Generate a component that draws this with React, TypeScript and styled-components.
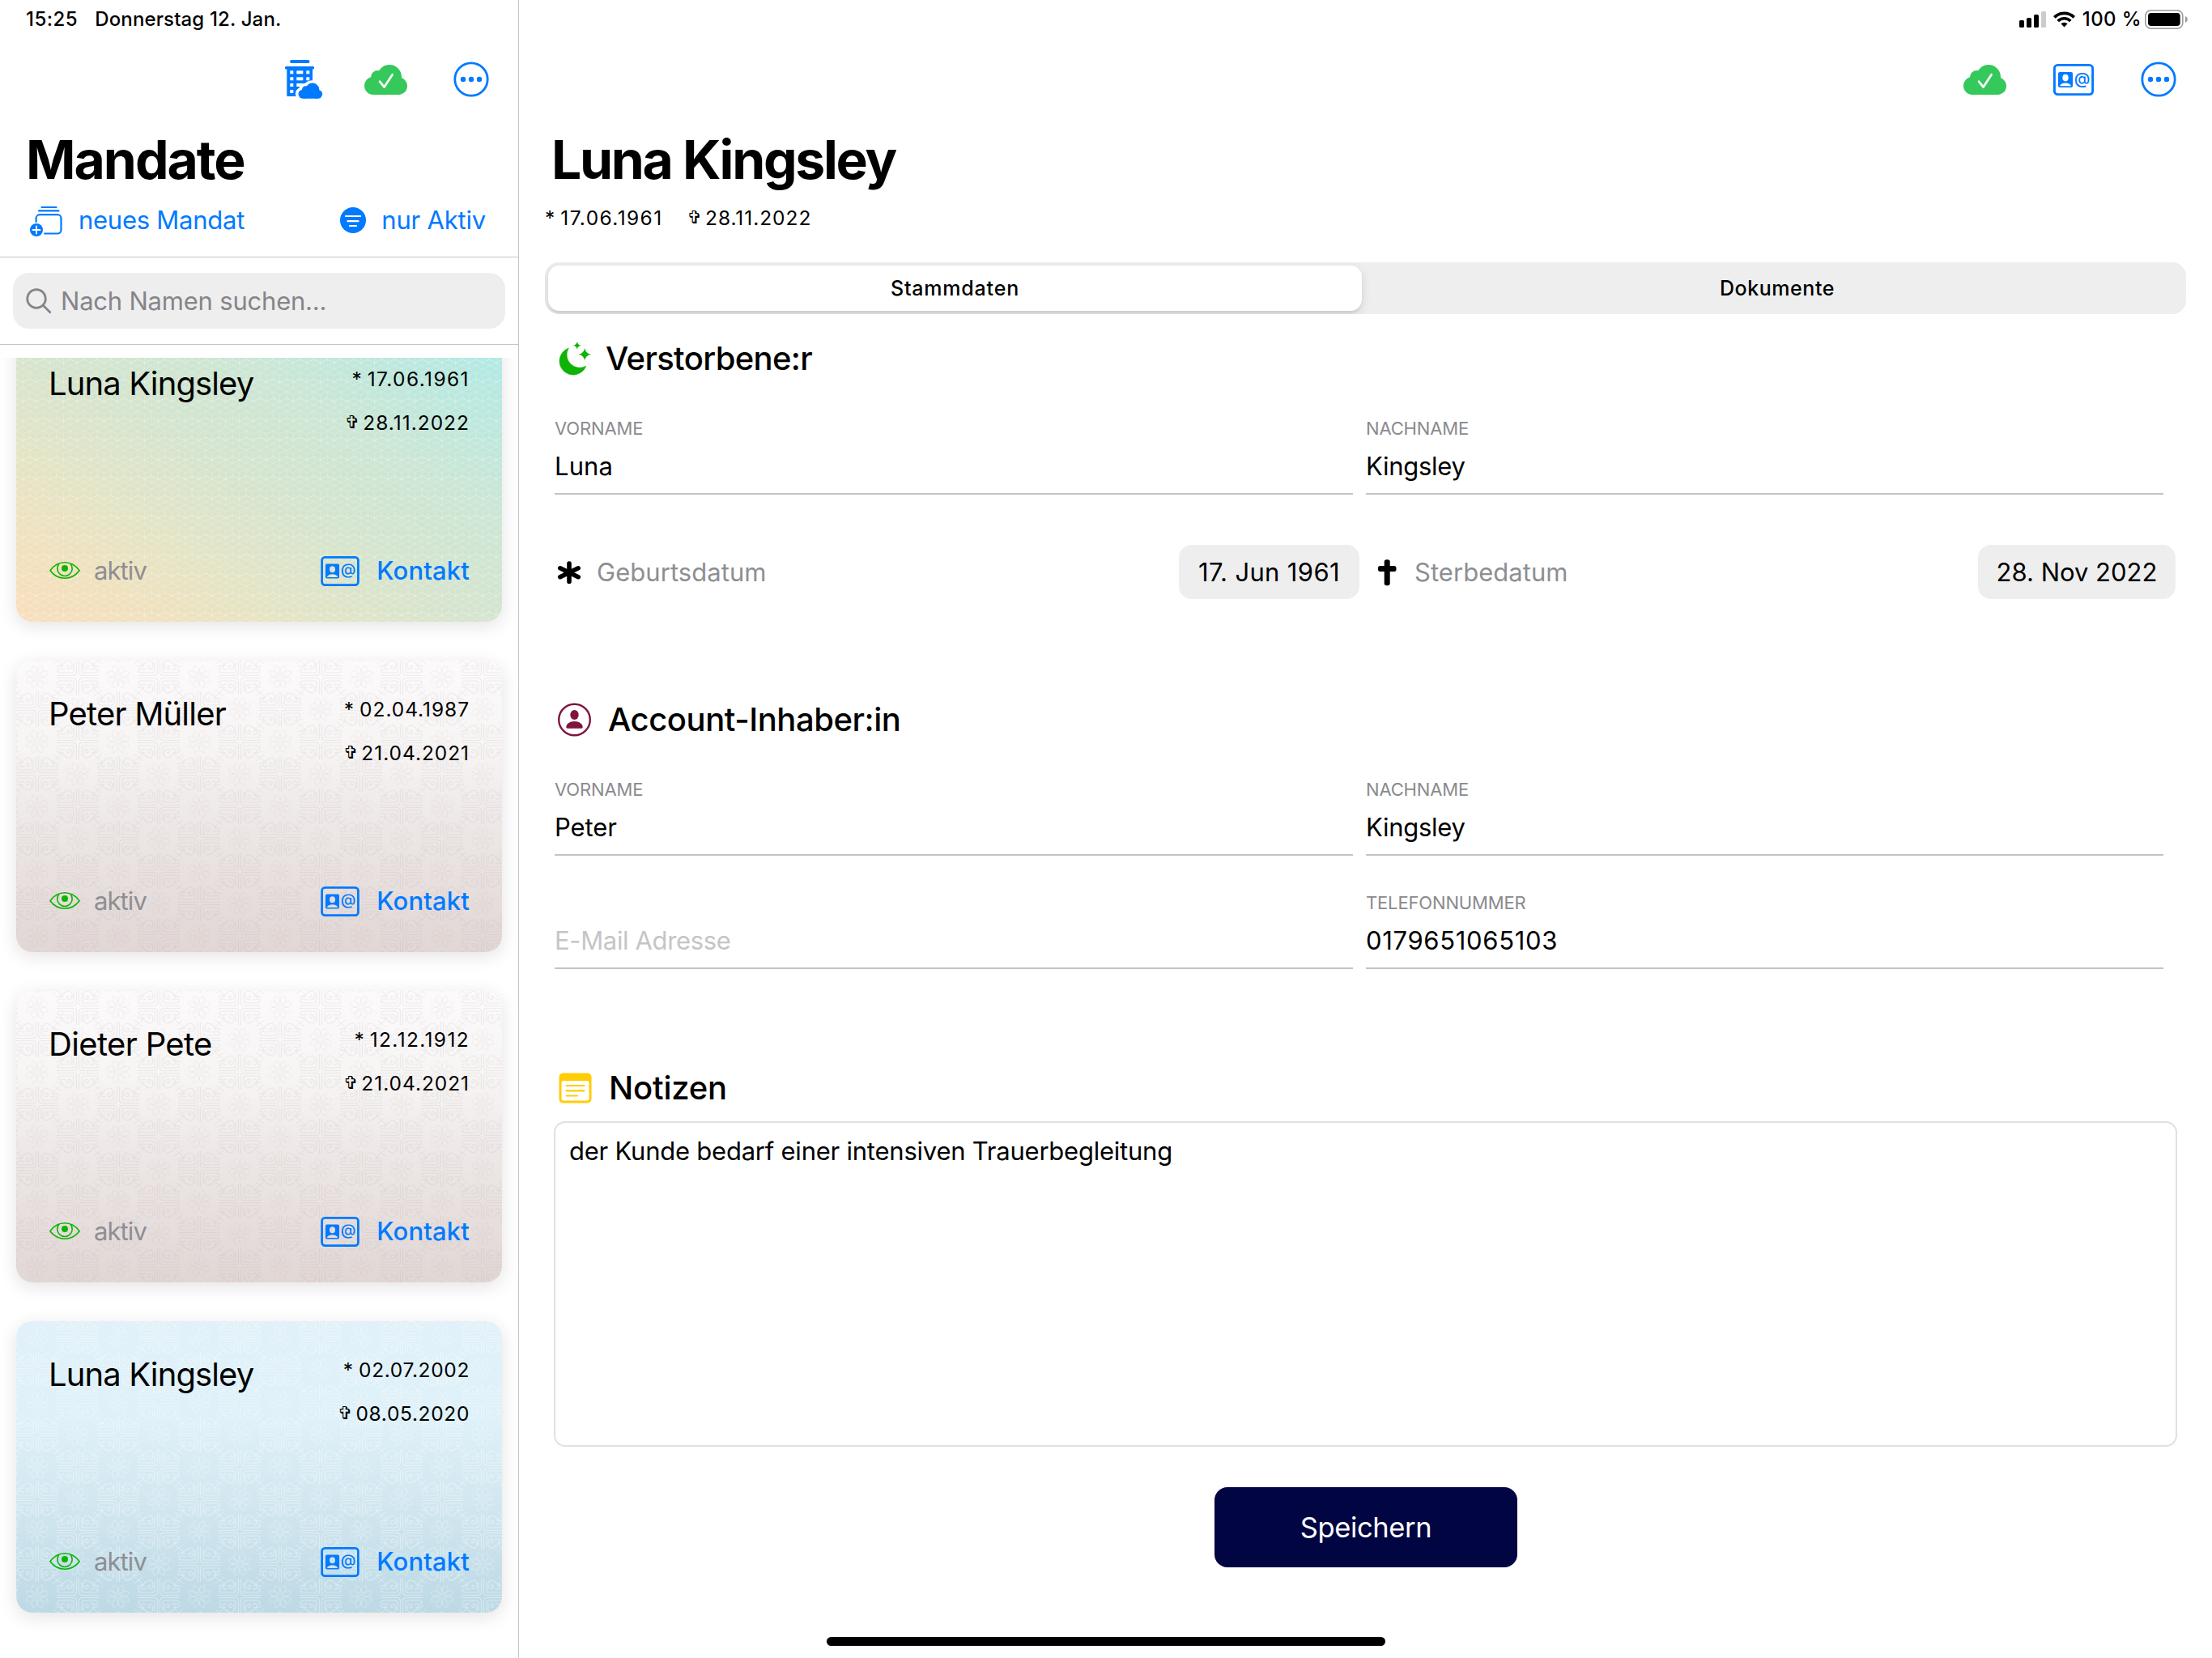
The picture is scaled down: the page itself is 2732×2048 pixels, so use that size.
import React from "react";
import styled, { createGlobalStyle, css } from "styled-components";

const BLUE = "#007aff";
const GREEN = "#0fb305";
const CLOUD_GREEN = "#35c85b";
const GRAY = "#8e8e93";

const GlobalStyle = createGlobalStyle`
  html, body { margin: 0; padding: 0; background: #fff; }
  * { box-sizing: border-box; }
  body { font-family: Inter, "Liberation Sans", sans-serif; color: #000; }
  svg { display: block; flex: none; overflow: visible; }
  button, input, textarea { font: inherit; color: inherit; border: 0; background: none; padding: 0; margin: 0; }
`;

/* ---------- text ---------- */

const Text = styled.span<{
  $size: number;
  $line?: number;
  $weight?: number;
  $track?: number;
  $color?: string;
}>`
  display: block;
  white-space: pre;
  font-size: ${(p) => p.$size}px;
  line-height: ${(p) => p.$line ?? 40}px;
  font-weight: ${(p) => p.$weight ?? 400};
  letter-spacing: ${(p) => p.$track ?? 0}px;
  color: ${(p) => p.$color ?? "inherit"};
`;

/* ---------- icons ---------- */

const CloudShape = ({ fill }: { fill: string }) => (
  <g fill={fill}>
    <circle cx="31" cy="15" r="15" />
    <circle cx="16.5" cy="15.5" r="8.5" />
    <circle cx="11" cy="26" r="11" />
    <circle cx="42.3" cy="26.3" r="10.7" />
    <path d="M11 15H40L43 26V37H11Z" />
  </g>
);

const CloudCheck = () => (
  <svg width="53" height="37" viewBox="0 0 53 37">
    <CloudShape fill={CLOUD_GREEN} />
    <path d="M19 20.6 24.6 27.6 34.6 12.2" fill="none" stroke="#fff" strokeWidth="2.7" strokeLinecap="round" strokeLinejoin="round" />
  </svg>
);

const Ellipsis = () => (
  <svg width="44" height="44" viewBox="0 0 44 44">
    <circle cx="22" cy="22" r="20.2" fill="none" stroke={BLUE} strokeWidth="2.8" />
    <g fill={BLUE}>
      <circle cx="12" cy="22" r="3.2" />
      <circle cx="22" cy="22" r="3.2" />
      <circle cx="32" cy="22" r="3.2" />
    </g>
  </svg>
);

const BuildingWindows = () => (
  <g fill="#fff">
    {[13.3, 21.3, 29, 37].map((y) => (
      <g key={y}>
        <rect x="6.3" y={y} width="4" height="4" />
        <rect x="14.3" y={y} width="8" height="4" />
        <rect x="26.3" y={y} width="4" height="4" />
      </g>
    ))}
  </g>
);

const BuildingSvg = styled.svg`
  margin-right: -5px;
`;

const BuildingCloud = () => (
  <BuildingSvg width="46" height="48" viewBox="0 0 46 48">
    <rect x="6.3" y="0" width="24" height="4" rx="1.6" fill={BLUE} />
    <rect x="0" y="8" width="36" height="3.6" rx="1.4" fill={BLUE} />
    <rect x="2.3" y="10" width="31.7" height="35" fill={BLUE} />
    <BuildingWindows />
    <g transform="translate(16.5 28.6) scale(.56 .52)" stroke="#fff" strokeWidth="13" strokeLinejoin="round">
      <CloudShape fill="#fff" />
    </g>
    <g transform="translate(16.5 28.6) scale(.56 .52)">
      <CloudShape fill={BLUE} />
    </g>
  </BuildingSvg>
);

const ContactCard = ({ width = 50, height = 39 }: { width?: number; height?: number }) => (
  <svg width={width} height={height} viewBox="0 0 50 39">
    <rect x="1.4" y="1.4" width="47.2" height="36.2" rx="4" fill="none" stroke={BLUE} strokeWidth="2.9" />
    <path
      fillRule="evenodd"
      fill={BLUE}
      d="M8 10H22A2 2 0 0 1 24 12V27A2 2 0 0 1 22 29H8A2 2 0 0 1 6 27V12A2 2 0 0 1 8 10ZM15 12.8A3.7 4.3 0 0 0 15 21.4A3.7 4.3 0 0 0 15 12.8ZM8 27.3H22C21.400 24.800 18.500 23.400 15 23.400C11.500 23.400 8.600 24.800 8 27.300Z"
    />
    <text x="35.600" y="24.700" fontSize="20" fontWeight="500" fill={BLUE} textAnchor="middle" fontFamily="Inter, sans-serif">
      @
    </text>
  </svg>
);

const NewCase = () => (
  <svg width="41" height="40" viewBox="0 -3 41 40">
    <g fill="none" stroke={BLUE} strokeWidth="2.2" strokeLinecap="round">
      <path d="M14.500 1H32.500M11 5.400H35.500" />
      <path d="M7.600 19V14.500A4.500 4.500 0 0 1 12.100 10.200H34A4.500 4.500 0 0 1 38.500 14.700V29A4.500 4.500 0 0 1 34 33.500H18" />
    </g>
    <circle cx="8" cy="29" r="8" fill={BLUE} />
    <path d="M8 24.500V33.500M3.500 29H12.500" stroke="#fff" strokeWidth="1.900" strokeLinecap="round" />
  </svg>
);

const FilterFilled = () => (
  <svg width="32" height="36" viewBox="-16 -18 32 36">
    <circle r="16" fill={BLUE} />
    <path d="M-9 -5H9M-6.500 1.200H6.500M-4 7H4" stroke="#fff" strokeWidth="2.200" strokeLinecap="round" />
  </svg>
);

const Magnifier = () => (
  <svg width="32" height="32" viewBox="0 0 32 32">
    <g fill="none" stroke="#858589" strokeWidth="2.700" strokeLinecap="round">
      <circle cx="13" cy="13" r="11.300" />
      <path d="M21.300 21.300 29.800 29.800" />
    </g>
  </svg>
);

const Eye = () => (
  <svg width="38" height="21" viewBox="0 0 38 21">
    <g fill="none" stroke={GREEN} strokeWidth="1.600">
      <path d="M.9 10.700C5.500 4.500 11.500 .8 19 .8S32.500 4.500 37.100 10.700C32.500 16.700 26.500 20.200 19 20.200S5.500 16.700 .9 10.700Z" strokeLinejoin="round" />
      <path d="M12 2.300A9.200 9.200 0 1 0 26 2.300" />
    </g>
    <circle cx="19" cy="8" r="4" fill={GREEN} />
  </svg>
);

const star = (x: number, y: number, r: number) =>
  `M${x} ${y - r}Q${x + r * 0.12} ${y - r * 0.12} ${x + r} ${y}Q${x + r * 0.12} ${y + r * 0.12} ${x} ${y + r}Q${x - r * 0.12} ${y + r * 0.12} ${x - r} ${y}Q${x - r * 0.12} ${y - r * 0.12} ${x} ${y - r}Z`;

const MoonStars = () => (
  <svg width="39" height="42" viewBox="0 0 39 42">
    <g fill={GREEN}>
      <path d="M12.300 8A17 17 0 1 0 33.800 30.200A16 16 0 0 1 12.300 8Z" strokeLinejoin="round" stroke={GREEN} strokeWidth=".6" />
      <path d={star(22.8, 4.8, 5)} />
      <path d={star(32.2, 15.7, 8)} />
    </g>
  </svg>
);

const PersonCircle = () => (
  <svg width="41" height="42" viewBox="1 0 41 42">
    <circle cx="20.500" cy="21" r="19.300" fill="none" stroke="#7f153f" strokeWidth="2.400" />
    <g fill="#7f153f">
      <ellipse cx="20.500" cy="15" rx="5.200" ry="6" />
      <path d="M10.300 30C10.300 26.500 14.500 23 20.500 23S30.700 26.500 30.700 30C30.700 31 30.200 31.700 29 31.700H12C10.800 31.700 10.300 31 10.300 30Z" />
    </g>
  </svg>
);

const NoteIcon = () => (
  <svg width="42" height="38" viewBox="0 0 42 38">
    <path
      fill="#ffcd05"
      fillRule="evenodd"
      d="M5.500 .5H35.500A5 5 0 0 1 40.500 5.500V32.500A5 5 0 0 1 35.500 37.500H5.500A5 5 0 0 1 .5 32.500V5.500A5 5 0 0 1 5.500 .5ZM6 10A2.500 2.500 0 0 0 3.500 12.500V32A2.500 2.500 0 0 0 6 34.500H35A2.500 2.500 0 0 0 37.500 32V12.500A2.500 2.500 0 0 0 35 10Z"
    />
    <path d="M9.500 16H31.500M9.500 22.300H31.500M9.500 28.500H23" stroke="#ffcd05" strokeWidth="2.200" strokeLinecap="round" />
  </svg>
);

const Asterisk = () => (
  <svg width="36" height="30" viewBox="-18 -15 36 30">
    <path d="M0 -11V11.500M-11.200 -5.200 11.200 5.700M-11.200 5.700 11.200 -5.200" stroke="#000" strokeWidth="5.600" strokeLinecap="round" />
  </svg>
);

const Cross = () => (
  <svg width="36" height="34" viewBox="0 0 36 34">
    <rect x="14.700" y="1.300" width="7" height="32" rx="2.800" />
    <rect x="7" y="9" width="22.500" height="7" rx="2.800" />
  </svg>
);

const Signal = () => (
  <svg width="33" height="20" viewBox="0 0 33 20">
    <rect x="0" y="11" width="6" height="9" rx="1.600" />
    <rect x="9" y="8" width="6" height="12" rx="1.600" />
    <rect x="18" y="4" width="6" height="16" rx="1.600" />
    <rect x="27" y="0" width="6" height="20" rx="1.600" fill="#cbcbcb" />
  </svg>
);

const Wifi = () => (
  <svg width="27" height="20" viewBox="0 0 27 20">
    <g fill="none" stroke="#000" strokeWidth="3.700">
      <path d="M1.300 7.400A17.400 17.400 0 0 1 25.700 7.400" />
      <path d="M5.700 12A11 11 0 0 1 21.300 12" />
    </g>
    <path d="M9.400 15.300A6 6 0 0 1 17.600 15.300L13.500 19.600Z" />
  </svg>
);

const Battery = () => (
  <svg width="53" height="24" viewBox="0 0 53 24">
    <rect x=".8" y=".8" width="46" height="22.400" rx="6.800" fill="none" stroke="#9b9b9b" strokeWidth="1.600" />
    <rect x="4" y="4" width="39.700" height="16" rx="3.800" />
    <path d="M50 8C52 8.800 52.800 10.300 52.800 12S52 15.200 50 16Z" fill="#9b9b9b" />
  </svg>
);

/* ---------- card textures ---------- */

const TextureSvg = styled.svg`
  position: absolute;
  inset: 0;
  width: 100%;
  height: 100%;
`;

const CubeTexture = () => (
  <TextureSvg>
    <defs>
      <pattern id="cubes" width="16.700" height="24" patternUnits="userSpaceOnUse">
        <path
          d="M0 4 8.350 0 16.700 4V12L8.350 16 0 12ZM0 4 8.350 8 16.700 4M8.350 8V16M8.350 16V24M0 12V20M0 12 8.350 16 16.700 12M0 20 8.350 16 16.700 20M0 20 8.350 24 16.700 20"
          fill="none"
          stroke="#fff"
          strokeOpacity=".3"
          strokeWidth=".700"
        />
      </pattern>
    </defs>
    <rect width="100%" height="100%" fill="url(#cubes)" />
  </TextureSvg>
);

const Blossom = ({ x, y }: { x: number; y: number }) => (
  <g transform={`translate(${x} ${y})`} strokeWidth=".7">
    <circle r="2.500" />
    {[22.5, 67.5, 112.5, 157.5, 202.5, 247.5, 292.5, 337.5].map((a) => (
      <path key={a} transform={`rotate(${a})`} d="M0 -4C-3 -6 -4.500 -12 -1.500 -13L0 -15L1.500 -13C4.500 -12 3 -6 0 -4" />
    ))}
  </g>
);

const Scroll = ({ x, y }: { x: number; y: number }) => (
  <g transform={`translate(${x} ${y})`} strokeWidth="1.200">
    {[
      [1, 1],
      [-1, 1],
      [1, -1],
      [-1, -1],
    ].map(([sx, sy]) => (
      <path
        key={`${sx}${sy}`}
        transform={`scale(${sx} ${sy})`}
        d="M1.500 22V6Q1.500 1.500 6 1.500H26M5 18V8Q5 5 8 5H22Q25 5 25 8Q24 11 21.500 9.500M9 20Q4.500 13 9 10Q14 8 13 13Q11 15 10 12M16 10Q20 7 21 12Q20 15 17.500 13M9 20Q14 20 17 17T27 12"
      />
    ))}
  </g>
);

const OrnamentTexture = ({ id, color, opacity }: { id: string; color: string; opacity: number }) => (
  <TextureSvg>
    <defs>
      <pattern id={id} x="26" y="20" width="100" height="80" patternUnits="userSpaceOnUse">
        <g fill="none" stroke={color} strokeOpacity={opacity} strokeWidth="1">
          <Blossom x={50} y={40} />
          <Blossom x={0} y={0} />
          <Blossom x={100} y={0} />
          <Blossom x={0} y={80} />
          <Blossom x={100} y={80} />
          <Scroll x={50} y={0} />
          <Scroll x={50} y={80} />
          <Scroll x={0} y={40} />
          <Scroll x={100} y={40} />
          <path d="M20 16 30 24M30 16 20 24M70 16 80 24M80 16 70 24M20 56 30 64M30 56 20 64M70 56 80 64M80 56 70 64" />
        </g>
      </pattern>
    </defs>
    <rect width="100%" height="100%" fill={`url(#${id})`} />
  </TextureSvg>
);

/* ---------- shell ---------- */

const Screen = styled.div`
  display: flex;
  width: 2732px;
  height: 2048px;
  background: #fff;
  overflow: hidden;
`;

const Sidebar = styled.aside`
  display: flex;
  flex-direction: column;
  width: 641px;
  flex: none;
  border-right: 1px solid #c6c6c8;
`;

const Main = styled.main`
  display: flex;
  flex-direction: column;
  flex: 1;
  min-width: 0;
`;

const StatusBar = styled.div<{ $end?: boolean }>`
  display: flex;
  align-items: center;
  height: 48px;
  padding: ${(p) => (p.$end ? "0 30px 0 0" : "0 0 1px 32px")};
  gap: ${(p) => (p.$end ? 9 : 21)}px;
  justify-content: ${(p) => (p.$end ? "flex-end" : "flex-start")};
`;

const StatusText = styled(Text)`
  margin-right: -5px;
`;

const Toolbar = styled.div<{ $right: number; $gap: number }>`
  display: flex;
  align-items: center;
  justify-content: flex-end;
  gap: ${(p) => p.$gap}px;
  height: 101px;
  padding-bottom: 1px;
  padding-right: ${(p) => p.$right}px;
`;

const Title = styled.h1<{ $left: number; $track: number }>`
  margin: 8px 0 0 ${(p) => p.$left}px;
  font-size: 66px;
  line-height: 80px;
  font-weight: 700;
  letter-spacing: ${(p) => p.$track}px;
`;

/* ---------- sidebar ---------- */

const Actions = styled.div`
  display: flex;
  justify-content: space-between;
  padding: 15px 40px 25px 37px;
  border-bottom: 1px solid #c6c6c8;
`;

const Action = styled.button<{ $gap: number }>`
  display: flex;
  align-items: center;
  height: 40px;
  gap: ${(p) => p.$gap}px;
`;

const SearchArea = styled.div`
  padding: 19px 16px 19px 16px;
  border-bottom: 1px solid #c6c6c8;
`;

const SearchField = styled.label`
  display: flex;
  align-items: center;
  gap: 11px;
  height: 69px;
  padding-left: 16px;
  border-radius: 20px;
  background: #eeeeee;
`;

const CardViewport = styled.div`
  flex: 1;
  min-height: 0;
  margin-top: 16px;
  overflow: hidden;
`;

const CardList = styled.div`
  display: flex;
  flex-direction: column;
  gap: 48px;
  margin-top: -34px;
  padding: 0 20px;
`;

type Tone = "dawn" | "stone" | "sky";

const tones: Record<Tone, string> = {
  dawn: "linear-gradient(to top right, #f8debb 0%, #f0e1be 15%, #e3e4c5 30%, #d5e4ce 48%, #cbe6d4 68%, #b9e8df 86%, #aee9e5 100%)",
  stone: "linear-gradient(#fcfafb 0%, #f7f4f4 30%, #ebe5e4 62%, #e1d7d5 100%)",
  sky: "linear-gradient(#e0f1f9 0%, #def0f8 35%, #cfe5ee 68%, #bcd9e5 100%)",
};

const Card = styled.article<{ $tone: Tone }>`
  position: relative;
  display: flex;
  flex-direction: column;
  justify-content: space-between;
  flex: none;
  height: 360px;
  padding: 40px 40px 43px 40px;
  border-radius: 20px;
  background: ${(p) => tones[p.$tone]};
  box-shadow: 0 5px 22px rgba(40, 20, 25, 0.12);
`;

const TextureClip = styled.div`
  position: absolute;
  inset: 0;
  border-radius: 20px;
  overflow: hidden;
`;

const CardRow = styled.div`
  position: relative;
  display: flex;
  justify-content: space-between;
`;

const Dates = styled.div`
  display: flex;
  flex-direction: column;
  align-items: flex-end;
  gap: 14px;
`;

const DateLine = styled.div`
  display: flex;
`;

const Mark = styled.span<{ $cross?: boolean }>`
  font-size: ${(p) => (p.$cross ? 22 : 24.5)}px;
  line-height: 40px;
  font-family: ${(p) => (p.$cross ? '"DejaVu Sans", sans-serif' : "Inter, sans-serif")};
  margin-right: ${(p) => (p.$cross ? 4 : 7)}px;
`;

const Label = styled.div<{ $gap: number }>`
  display: flex;
  align-items: center;
  gap: ${(p) => p.$gap}px;
`;

const DateText = ({ value, cross, track, size = 24.5 }: { value: string; cross?: boolean; track: number; size?: number }) => (
  <DateLine>
    <Mark $cross={cross}>{cross ? "✞" : "*"}</Mark>
    <Text $size={size} $track={track}>
      {value}
    </Text>
  </DateLine>
);

interface CaseItem {
  name: string;
  nameTrack: number;
  born: string;
  bornTrack: number;
  died: string;
  diedTrack: number;
  tone: Tone;
}

const cases: CaseItem[] = [
  { name: "Luna Kingsley", nameTrack: -0.88, born: "17.06.1961", bornTrack: 1.4, died: "28.11.2022", diedTrack: 1, tone: "dawn" },
  { name: "Peter Müller", nameTrack: -0.8, born: "02.04.1987", bornTrack: 0.95, died: "21.04.2021", diedTrack: 0.95, tone: "stone" },
  { name: "Dieter Pete", nameTrack: -0.65, born: "12.12.1912", bornTrack: 1.35, died: "21.04.2021", diedTrack: 0.95, tone: "stone" },
  { name: "Luna Kingsley", nameTrack: -0.88, born: "02.07.2002", bornTrack: 0.65, died: "08.05.2020", diedTrack: 0.65, tone: "sky" },
];

const StatusEye = styled.span`
  padding: 0 0 1px 1px;
`;

const CaseCard = ({ item, index }: { item: CaseItem; index: number }) => (
  <Card $tone={item.tone}>
    <TextureClip>
      {item.tone === "dawn" && <CubeTexture />}
      {item.tone === "stone" && <OrnamentTexture id={`ornament-${index}`} color="#a08c8a" opacity={0.12} />}
      {item.tone === "sky" && <OrnamentTexture id={`ornament-${index}`} color="#ffffff" opacity={0.36} />}
    </TextureClip>
    <CardRow>
      <Text $size={40} $line={51} $track={item.nameTrack}>
        {item.name}
      </Text>
      <Dates>
        <DateText value={item.born} track={item.bornTrack} />
        <DateText value={item.died} track={item.diedTrack} cross />
      </Dates>
    </CardRow>
    <CardRow>
      <Label $gap={17}>
        <StatusEye>
          <Eye />
        </StatusEye>
        <Text $size={31} $track={-0.9} $color={GRAY}>
          aktiv
        </Text>
      </Label>
      <Label $gap={21}>
        <ContactCard width={48} height={37} />
        <Text $size={31} $weight={500} $color={BLUE} $track={0.15}>
          Kontakt
        </Text>
      </Label>
    </CardRow>
  </Card>
);

/* ---------- detail form ---------- */

const LifeDates = styled.div`
  display: flex;
  gap: 30px;
  margin: 12px 0 0 32px;
`;

const Segmented = styled.div`
  display: flex;
  flex: none;
  height: 64px;
  margin: 35px 32px 0;
  padding: 4px;
  border-radius: 17px;
  background: #eeeeee;
  overflow: hidden;
`;

const Segment = styled.button<{ $active?: boolean }>`
  flex: 1;
  display: flex;
  align-items: center;
  justify-content: center;
  padding-left: 12px;
  border-radius: 14px;
  ${(p) =>
    p.$active &&
    css`
      flex: none;
      width: 1005px;
      padding-left: 0;
      background: #fff;
      box-shadow: 0 4px 12px rgba(0, 0, 0, 0.12), 0 3px 2px rgba(0, 0, 0, 0.05);
    `}
`;

const SectionHeading = styled.div<{ $top: number; $gap: number }>`
  display: flex;
  align-items: center;
  gap: ${(p) => p.$gap}px;
  height: 56px;
  flex: none;
  margin: ${(p) => p.$top}px 0 0 49px;
`;

const FieldGrid = styled.div`
  display: grid;
  grid-template-columns: 986px 985px;
  gap: 43px 16px;
  margin: 43px 0 0 44px;
`;

const Field = styled.div`
  height: 97px;
  padding-bottom: 11px;
  border-bottom: 2px solid #c4c4c6;
  display: flex;
  flex-direction: column;
  justify-content: space-between;
`;

const DateGrid = styled.div`
  display: grid;
  grid-template-columns: 994px 992px;
  gap: 16px;
  margin: 62px 0 0 44px;
`;

const DateField = styled.div`
  display: flex;
  align-items: center;
  justify-content: space-between;
  height: 67px;
`;

const DatePill = styled.button<{ $width: number }>`
  display: flex;
  align-items: center;
  justify-content: center;
  width: ${(p) => p.$width}px;
  height: 67px;
  border-radius: 16px;
  background: #eeeeee;
`;

const Notes = styled.div`
  height: 402px;
  width: 2005px;
  flex: none;
  margin: 13px 0 0 43px;
  padding: 15px 17px;
  border: 2px solid #e1e1e3;
  border-radius: 14px;
`;

const SaveButton = styled.button`
  display: flex;
  align-items: center;
  justify-content: center;
  flex: none;
  width: 374px;
  height: 99px;
  margin: 50px 0 0 859px;
  border-radius: 16px;
  background: #010542;
`;

const HomeIndicator = styled.div`
  width: 690px;
  height: 11px;
  flex: none;
  margin: 86px 0 0 380px;
  border-radius: 6px;
  background: #000;
`;

const FormField = ({ label, value, placeholder, track = 0 }: { label?: string; value?: string; placeholder?: string; track?: number }) => (
  <Field>
    <Text $size={22} $line={30} $color="#8a8a8e" $track={-0.15}>
      {label ?? " "}
    </Text>
    <Text $size={31} $line={44} $track={track} $color={value ? "#000" : "#c5c5c7"}>
      {value ?? placeholder}
    </Text>
  </Field>
);

export default function App() {
  return (
    <Screen>
      <GlobalStyle />
      <Sidebar>
        <StatusBar>
          <Text $size={24} $weight={500} $track={0.5}>
            15:25
          </Text>
          <Text $size={24} $weight={500} $track={0.14}>
            Donnerstag 12. Jan.
          </Text>
        </StatusBar>
        <Toolbar $right={36} $gap={57}>
          <BuildingCloud />
          <CloudCheck />
          <Ellipsis />
        </Toolbar>
        <Title $left={32} $track={-2}>
          Mandate
        </Title>
        <Actions>
          <Action $gap={19}>
            <NewCase />
            <Text $size={31} $track={-0.26} $color={BLUE}>
              neues Mandat
            </Text>
          </Action>
          <Action $gap={19}>
            <FilterFilled />
            <Text $size={31} $track={-0.2} $color={BLUE}>
              nur Aktiv
            </Text>
          </Action>
        </Actions>
        <SearchArea>
          <SearchField>
            <Magnifier />
            <Text $size={31} $track={-0.21} $color="#858589">
              Nach Namen suchen...
            </Text>
          </SearchField>
        </SearchArea>
        <CardViewport>
          <CardList>
            {cases.map((item, i) => (
              <CaseCard key={i} item={item} index={i} />
            ))}
          </CardList>
        </CardViewport>
      </Sidebar>

      <Main>
        <StatusBar $end>
          <Signal />
          <Wifi />
          <StatusText $size={24} $weight={500} $track={0.4}>
            100 %
          </StatusText>
          <Battery />
        </StatusBar>
        <Toolbar $right={44} $gap={58}>
          <CloudCheck />
          <ContactCard />
          <Ellipsis />
        </Toolbar>
        <Title $left={40} $track={-2.3}>
          Luna Kingsley
        </Title>
        <LifeDates>
          <DateText value="17.06.1961" track={1.4} />
          <DateText value="28.11.2022" track={0.95} cross />
        </LifeDates>
        <Segmented>
          <Segment $active>
            <Text $size={25} $weight={500} $track={0.8}>
              Stammdaten
            </Text>
          </Segment>
          <Segment>
            <Text $size={25} $weight={500} $track={0.55}>
              Dokumente
            </Text>
          </Segment>
        </Segmented>

        <SectionHeading $top={27} $gap={19}>
          <MoonStars />
          <Text $size={40} $weight={500} $line={56} $track={-0.65}>
            Verstorbene:r
          </Text>
        </SectionHeading>
        <FieldGrid>
          <FormField label="VORNAME" value="Luna" track={0.1} />
          <FormField label="NACHNAME" value="Kingsley" track={-0.3} />
        </FieldGrid>
        <DateGrid>
          <DateField>
            <Label $gap={16}>
              <Asterisk />
              <Text $size={31} $color={GRAY} $track={0.05}>
                Geburtsdatum
              </Text>
            </Label>
            <DatePill $width={223}>
              <Text $size={31} $track={0.35}>
                17. Jun 1961
              </Text>
            </DatePill>
          </DateField>
          <DateField>
            <Label $gap={16}>
              <Cross />
              <Text $size={31} $color={GRAY} $track={0.05}>
                Sterbedatum
              </Text>
            </Label>
            <DatePill $width={244}>
              <Text $size={31}>28. Nov 2022</Text>
            </DatePill>
          </DateField>
        </DateGrid>

        <SectionHeading $top={121} $gap={20}>
          <PersonCircle />
          <Text $size={40} $weight={500} $line={56} $track={-0.45}>
            Account-Inhaber:in
          </Text>
        </SectionHeading>
        <FieldGrid>
          <FormField label="VORNAME" value="Peter" track={-0.1} />
          <FormField label="NACHNAME" value="Kingsley" track={-0.3} />
          <FormField placeholder="E-Mail Adresse" track={-0.35} />
          <FormField label="TELEFONNUMMER" value="0179651065103" track={0.68} />
        </FieldGrid>

        <SectionHeading $top={119} $gap={20}>
          <NoteIcon />
          <Text $size={40} $weight={500} $line={56} $track={-0.2}>
            Notizen
          </Text>
        </SectionHeading>
        <Notes>
          <Text $size={31} $track={-0.23}>
            der Kunde bedarf einer intensiven Trauerbegleitung
          </Text>
        </Notes>
        <SaveButton>
          <Text $size={34.5} $line={50} $track={-0.4} $color="#fff">
            Speichern
          </Text>
        </SaveButton>
        <HomeIndicator />
      </Main>
    </Screen>
  );
}
